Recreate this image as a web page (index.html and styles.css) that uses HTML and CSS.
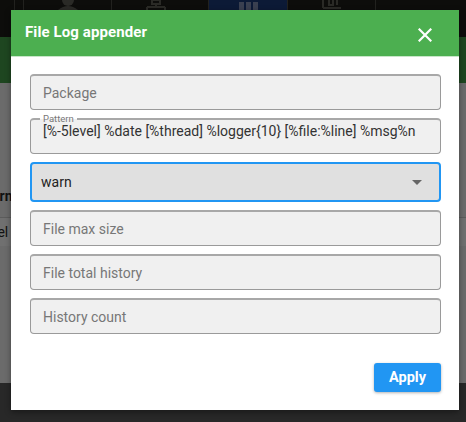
FILE: index.html
```html
<!DOCTYPE html>
<html>
<head>
<meta charset="utf-8">
<link rel="stylesheet" href="styles.css">
</head>
<body>
<div class="app">
  <div class="topbar">
    <div class="tab-edge"></div>
    <div class="tab"><svg width="26" height="10" viewBox="0 0 26 10"><circle cx="13" cy="0" r="6" fill="#2a2a26"/><path d="M3 10 Q13 2 23 10Z" fill="#2a2a26"/></svg></div>
    <div class="tab"><svg width="26" height="10" viewBox="0 0 26 10"><rect x="9" y="0" width="8" height="4" fill="none" stroke="#2a2a26" stroke-width="2"/><path d="M13 4v3M4 7h18M4 7v3M22 7v3" stroke="#2a2a26" stroke-width="2" fill="none"/></svg></div>
    <div class="tab active"><svg width="26" height="10" viewBox="0 0 26 10"><rect x="4" y="2" width="5" height="8" fill="#3a4050"/><rect x="11" y="2" width="5" height="8" fill="#3a4050"/><rect x="18" y="2" width="5" height="8" fill="#3a4050"/></svg></div>
    <div class="tab"><svg width="26" height="10" viewBox="0 0 26 10"><path d="M4 0v8M4 8h18M10 0v5h4V0M18 0v5" stroke="#2a2a26" stroke-width="2" fill="none"/></svg></div>
    <div class="tab"></div>
  </div>
  <div class="greenbar"></div>
  <div class="content">
    <div class="row-head"><span class="cut bold">Warn</span></div>
    <div class="row"><span class="cut">level</span></div>
  </div>
  <div class="footer"></div>
</div>

<div class="modal">
  <div class="modal-header">
    <h2 class="modal-title">File Log appender</h2>
    <svg class="close" width="14" height="14" viewBox="0 0 14 14"><path d="M1.5 1.5L12.5 12.5M12.5 1.5L1.5 12.5" stroke="#fff" stroke-width="2.2" stroke-linecap="square"/></svg>
  </div>
  <div class="modal-body">
    <div class="field"><span class="placeholder">Package</span></div>
    <div class="field labeled">
      <span class="float-label">Pattern</span>
      <span class="value">[%-5level] %date [%thread] %logger{10} [%file:%line] %msg%n</span>
    </div>
    <div class="field select">
      <span class="value">warn</span>
      <svg class="arrow" width="10" height="5" viewBox="0 0 10 5"><path d="M0 0H10L5 5Z" fill="#666"/></svg>
    </div>
    <div class="field"><span class="placeholder">File max size</span></div>
    <div class="field"><span class="placeholder">File total history</span></div>
    <div class="field"><span class="placeholder">History count</span></div>
    <div class="actions">
      <button class="apply">Apply</button>
    </div>
  </div>
</div>
</body>
</html>
```

FILE: styles.css
```css
* { box-sizing: border-box; }
html, body { margin: 0; padding: 0; }
body {
  width: 466px;
  height: 422px;
  overflow: hidden;
  position: relative;
  font-family: Roboto, "Liberation Sans", sans-serif;
  background: #282828;
}
.app {
  display: flex;
  flex-direction: column;
  height: 422px;
}
.topbar {
  height: 37px;
  background: #0d0d0b;
  display: flex;
  padding-left: 14px;
}
.tab-edge { width: 9px; border-left: 1px solid #22221f; }
.tab {
  width: 88px;
  border-left: 1px solid #22221f;
  display: flex;
  justify-content: center;
  align-items: flex-start;
}
.tab.active {
  background: #0c1a36;
  margin-left: 9px;
  width: 79px;
}
.greenbar {
  height: 46px;
  background: #1e4620;
}
.content {
  flex: 1;
  background: #6b6b6b;
  display: flex;
  flex-direction: column;
  padding-top: 92px;
}
.row-head {
  height: 43px;
  border-bottom: 1px solid #5c5c5c;
  display: flex;
  align-items: center;
}
.row {
  height: 28px;
  display: flex;
  align-items: center;
  background: #707070;
}
.cut {
  font-size: 14px;
  color: #111;
  margin-left: -20px;
}
.bold { font-weight: bold; }
.footer { height: 39px; background: #282828; }

.modal {
  position: absolute;
  left: 11px;
  top: 10px;
  width: 448px;
  height: 400px;
  background: #fff;
  box-shadow: 0 2px 6px rgba(0,0,0,0.4);
  display: flex;
  flex-direction: column;
}
.modal-header {
  height: 47px;
  background: #4caf50;
  border-bottom: 1px solid #c8e6c9;
  display: flex;
  align-items: center;
  justify-content: space-between;
  padding: 0 27px 0 14px;
}
.modal-title {
  margin: 0;
  color: #fff;
  font-size: 15px;
  font-weight: bold;
  letter-spacing: 0.1px;
  padding-bottom: 2px;
}
.close { display: block; margin-top: 3px; }
.modal-body {
  flex: 1;
  padding: 17px 18px 0 19px;
  display: flex;
  flex-direction: column;
  gap: 8px;
}
.field {
  position: relative;
  height: 36px;
  background: #f0f0f0;
  border: 1px solid #9a9a9a;
  border-top: 2px solid #a8a8a8;
  border-radius: 4px;
  display: flex;
  align-items: center;
  padding: 0 12px;
  font-size: 14px;
}
.placeholder { color: #777; }
.value { color: #333; white-space: nowrap; }
.labeled { align-items: flex-start; padding-top: 3px; }
.float-label {
  position: absolute;
  left: 9px;
  top: -7px;
  padding: 0 3px;
  font-size: 9.5px;
  color: #777;
  background: linear-gradient(#fff 0 50%, #f0f0f0 50%);
}
.select {
  height: 40px;
  background: #e0e0e0;
  border: 2px solid #2196f3;
  border-radius: 4px;
  justify-content: space-between;
  padding: 0 17px 0 9px;
}
.select .value { color: #222; }
.arrow { display: block; }
.actions {
  display: flex;
  justify-content: flex-end;
  padding-top: 21px;
}
.apply {
  width: 67px;
  height: 29px;
  border: none;
  border-radius: 3px;
  background: #2196f3;
  color: #fff;
  font-family: Roboto, "Liberation Sans", sans-serif;
  font-weight: bold;
  font-size: 14.5px;
  box-shadow: 0 1px 3px rgba(0,0,0,0.3);
  padding: 0;
}
```
